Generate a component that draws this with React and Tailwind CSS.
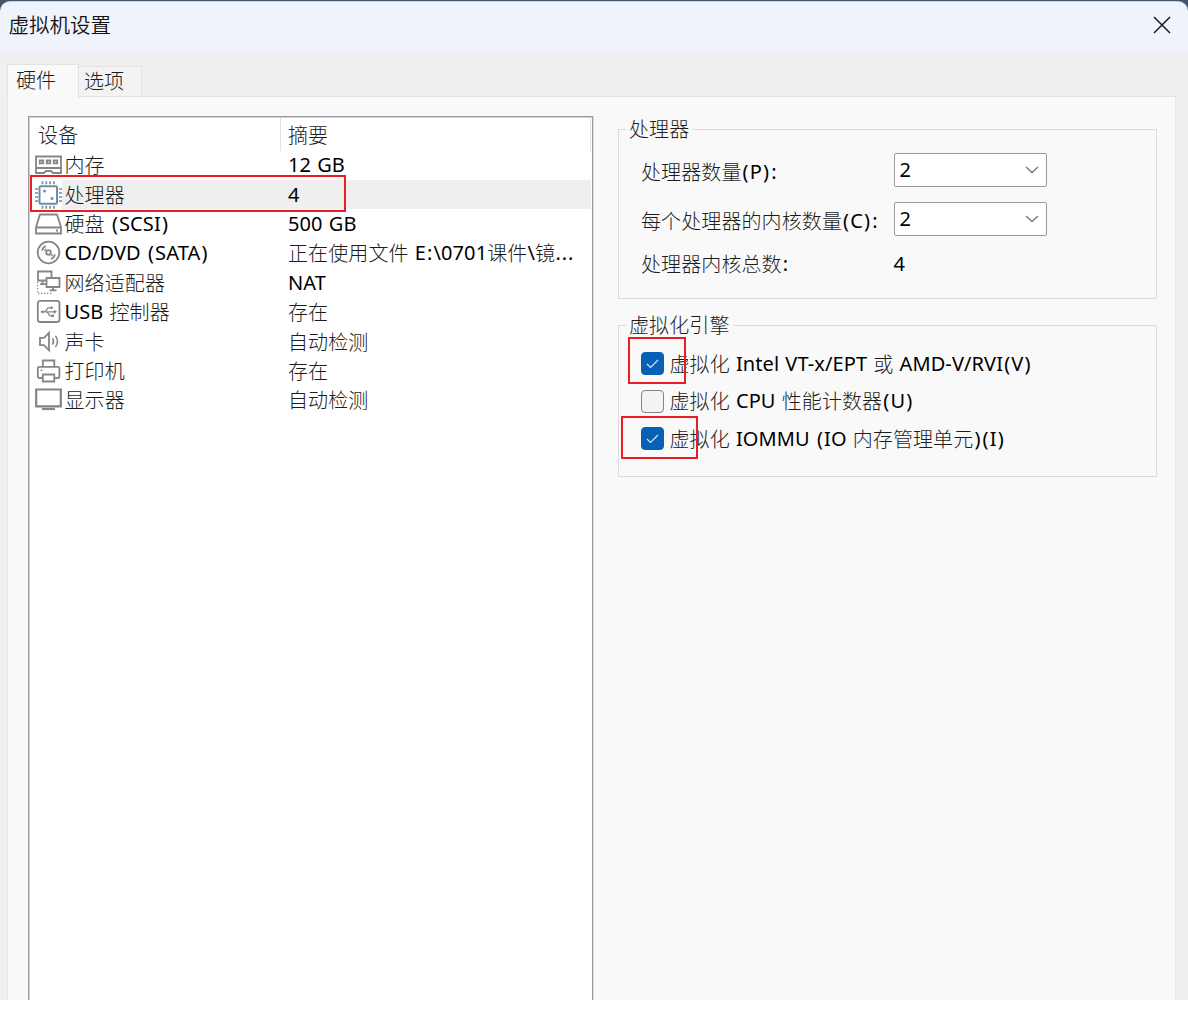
import React, { useState } from 'react';

// Latin runs are darker and heavier than the Chinese ones, brackets and colons sit wider
function Label({ children }) {
  const parts = String(children).split(/([\u4e00-\u9fff]+|[():.])/).filter(Boolean);
  return (
    <span className="whitespace-pre">
      {parts.map((part, i) => {
        if (/[\u4e00-\u9fff]/.test(part)) {
          return <span key={i} className="relative top-px font-light text-[#1c1c1c] tracking-[0.100px]">{part}</span>;
        }
        if (/^[():]$/.test(part)) {
          return <span key={i} className="px-[1.100px] text-black">{part}</span>;
        }
        if (part === '.') {
          return <span key={i} className="px-[0.450px] text-black">{part}</span>;
        }
        return <span key={i} className="text-black [word-spacing:0.800px] tracking-[0.100px]">{part}</span>;
      })}
    </span>
  );
}

function DeviceIcon({ color = '#858585', children }) {
  return (
    <svg width="28" height="28" viewBox="0 0 28 28" fill="none" stroke={color} strokeWidth="1.8" className="shrink-0">
      {children}
    </svg>
  );
}

const MemoryIcon = () => (
  <DeviceIcon>
    <path d="M2 5.500h25v11.500H2zM2 17v5h8l2-2h5l2 2h8v-5" />
    <path d="M5.800 9.500h3.400v2.900H5.800zM12.800 9.500h3.400v2.900h-3.400zM19.800 9.500h3.400v2.900h-3.400z" strokeWidth="1.900" />
  </DeviceIcon>
);

const CpuIcon = () => (
  <DeviceIcon color="#6f8ea6">
    <rect x="5.500" y="5.200" width="17.500" height="17.500" rx="1" strokeWidth="2" />
    <path d="M8.500 0.200v3M12.300 0.200v3M16.200 0.200v3M20 0.200v3M8.500 24.700v3M12.300 24.700v3M16.200 24.700v3M20 24.700v3" strokeWidth="1.700" />
    <path d="M1 8h3M1 12h3M1 16h3M1 20h3M25 8h3M25 12h3M25 16h3M25 20h3" strokeWidth="1.700" />
    <circle cx="10.500" cy="10" r="1.500" fill="#6f8ea6" stroke="none" />
    <circle cx="18" cy="17.600" r="1.500" fill="#6f8ea6" stroke="none" />
  </DeviceIcon>
);

const DiskIcon = () => (
  <DeviceIcon>
    <path d="M2 17L6 4.500h17L27 17v6.500H2zM2 17.500h25" />
    <path d="M22 20.500h2" />
  </DeviceIcon>
);

const DiscIcon = () => (
  <DeviceIcon>
    <circle cx="14.500" cy="13.500" r="10.800" />
    <circle cx="14.500" cy="13.500" r="2.300" />
    <path d="M8 11.500q1-3.500 4-4.500M17 20q3-1 4-4.500" />
    <path d="M10.500 12q.5-1.500 1.500-2.200M17 17.300q1.200-.8 1.700-2.200" strokeWidth="1.200" />
  </DeviceIcon>
);

const NetworkIcon = () => (
  <DeviceIcon>
    <path d="M12 11.500H4v-9h13.500v5.500" />
    <path d="M8.500 12v3M6 15.200h6" />
    <path d="M12.500 9h13v9h-13zM19 18v3M15.500 21.300h7" />
    <path d="M3.700 13v11M4 24.300h14" strokeDasharray="1.300 1.700" strokeWidth="1.200" />
  </DeviceIcon>
);

const UsbIcon = () => (
  <DeviceIcon>
    <rect x="3.800" y="2.800" width="21.700" height="21.200" rx="2.500" />
    <path d="M7 13.800h14M11 13.800l3-4h2.500M13 13.800l3 4h2" strokeWidth="1.300" />
    <path d="M6.500 13.800l3-2v4zM20 11.800l3 2-3 2z" fill="#858585" stroke="none" />
    <circle cx="17.500" cy="9.800" r="1.400" fill="#858585" stroke="none" />
    <path d="M17.500 16.600h2.500v2.500h-2.500z" fill="#858585" stroke="none" />
  </DeviceIcon>
);

const SoundIcon = () => (
  <DeviceIcon>
    <path d="M6 9.800h4l5-5v17.500L10 17.100H6z" />
    <path d="M18.500 10.100q2 3.300 0 6.600M21.500 7.800q4 5.600 0 11.200" strokeWidth="1.500" />
  </DeviceIcon>
);

const PrinterIcon = () => (
  <DeviceIcon>
    <path d="M8.800 9.500V3.500h11.500v6M8.500 21H5.500q-1.700 0-1.700-1.700v-7.800q0-1.700 1.700-1.700h18.200q1.700 0 1.700 1.700v7.800q0 1.700-1.700 1.700H21" />
    <path d="M8.800 17.500h11.500v7H8.800z" />
    <path d="M6.500 13.300h2" strokeWidth="1.400" />
  </DeviceIcon>
);

const DisplayIcon = () => (
  <DeviceIcon>
    <path d="M2.200 3.500h24.600v16.800H2.200z" strokeWidth="2.200" />
    <path d="M8 23h13" strokeWidth="2.200" />
  </DeviceIcon>
);

const devices = [
  { icon: MemoryIcon, name: '内存', summary: '12 GB' },
  { icon: CpuIcon, name: '处理器', summary: '4' },
  { icon: DiskIcon, name: '硬盘 (SCSI)', summary: '500 GB' },
  { icon: DiscIcon, name: 'CD/DVD (SATA)', summary: '正在使用文件 E:\\0701课件\\镜...' },
  { icon: NetworkIcon, name: '网络适配器', summary: 'NAT' },
  { icon: UsbIcon, name: 'USB 控制器', summary: '存在' },
  { icon: SoundIcon, name: '声卡', summary: '自动检测' },
  { icon: PrinterIcon, name: '打印机', summary: '存在' },
  { icon: DisplayIcon, name: '显示器', summary: '自动检测' },
];

function DeviceList() {
  const [selected, setSelected] = useState(1);

  return (
    <div className="w-[565px] shrink-0 pt-px pl-px bg-white border border-b-0 border-[#999ca4] shadow-[inset_1px_1px_0_#cfd1d8,1px_0_0_#dcdde0]">
      <div className="flex h-[32.600px]">
        <div className="w-[251px] pl-[8px] pt-px border-r border-[#e2e2e2] leading-8"><Label>设备</Label></div>
        <div className="flex-1 pl-[7px] pt-px mr-px border-r border-[#e2e2e2] leading-8"><Label>摘要</Label></div>
      </div>
      {devices.map(({ icon: Icon, name, summary }, i) => (
        <div key={name} onClick={() => setSelected(i)} className="relative flex items-center h-[29.400px] pl-1">
          <Icon />
          <div className={`flex flex-1 items-center h-full mr-px pl-[2.500px] ${i === selected ? 'bg-[#efefef]' : ''}`}>
            <div className="w-[223.500px]"><Label>{name}</Label></div>
            <Label>{summary}</Label>
          </div>
          {i === selected && (
            <div className="absolute left-0 -top-[4.500px] w-[316px] h-[37px] border-2 border-[#ec1c24]" />
          )}
        </div>
      ))}
    </div>
  );
}

function Group({ title, className, children }) {
  return (
    <fieldset className={`border border-[#dcdcdc] ${className}`}>
      <legend className="ml-[7px] px-[3px] h-6 leading-6"><Label>{title}</Label></legend>
      {children}
    </fieldset>
  );
}

function Combo({ value }) {
  return (
    <div className="flex items-center justify-between w-[153px] h-[34px] pl-[5px] pr-[7px] bg-white border border-[#9a9a9a] rounded-[2px]">
      <Label>{value}</Label>
      <svg width="14" height="8" viewBox="0 0 14 8" fill="none" stroke="#777" strokeWidth="1.300">
        <path d="M1 1l6 5.500L13 1" />
      </svg>
    </div>
  );
}

function Option({ checked, label, mark }) {
  return (
    <div className="relative flex items-center h-[37.500px] pl-[22px]">
      <span className={`flex items-center justify-center w-[23px] h-[23px] mr-[5.500px] rounded-[4px] border ${checked ? 'bg-[#0560b6] border-[#0560b6]' : 'bg-[#f3f3f3] border-[#858585]'}`}>
        {checked && (
          <svg width="13" height="10" viewBox="0 0 13 10" fill="none" stroke="#d5e5f4" strokeWidth="1.200">
            <path d="M1 5l3.500 3.500L12 1" />
          </svg>
        )}
      </span>
      <Label>{label}</Label>
      {mark && <div className={`absolute border-2 border-[#ec1c24] ${mark}`} />}
    </div>
  );
}

export default function App() {
  return (
    <div
      className="flex flex-col w-[1188px] h-[1013px] pb-[13px] bg-white overflow-hidden text-[20px] leading-6 text-black"
      style={{ fontFamily: '"Noto Sans", "Noto Sans CJK SC", sans-serif' }}
    >
      <div className="flex flex-col flex-1 min-h-0 bg-[#efefef]">
        {/* Title bar */}
        <div className="h-[51px] pt-px bg-[#44546b]">
          <div className="flex items-center justify-between h-[50px] pb-[3px] pl-[8.500px] pr-[17px] bg-[#eff3fb] border-t border-[#c9d0dc] rounded-t-[10px]">
            <span className="text-[20.500px] font-[350] text-[#111]">虚拟机设置</span>
            <svg width="18" height="18" viewBox="0 0 18 18" fill="none" stroke="#1a1a1a" strokeWidth="1.500">
              <path d="M1 1l16 16M17 1L1 17" />
            </svg>
          </div>
        </div>

        {/* Tabs */}
        <div className="flex items-end h-[46px] pl-[7px]">
          <div className="relative w-[72px] h-[34px] -mb-px pl-[8px] bg-[#f9f9f9] border border-b-0 border-[#e3e3e3] leading-[30px]"><Label>硬件</Label></div>
          <div className="w-[63px] h-[31px] pl-[5px] bg-[#f3f3f3] border border-l-0 border-b-0 border-[#e3e3e3] leading-[28px]"><Label>选项</Label></div>
        </div>

        <div className="flex flex-1 ml-[7px] mr-[12px] pl-5 pt-[19px] bg-[#f9f9f9] border border-t-[#e3e3e3] border-[#e6e6e6] border-b-0 -mt-px">
          <DeviceList />
          <div className="flex flex-col w-[539px] ml-[25px] pt-[1px] gap-[14px]">
            <Group title="处理器" className="h-[182px]">
              <div className="grid grid-cols-[252.500px_153px] items-center gap-y-[15px] pl-[22px] pt-3">
                <div className="pt-[3px]"><Label>处理器数量(P):</Label></div>
                <Combo value="2" />
                <div className="pt-[3px]"><Label>每个处理器的内核数量(C):</Label></div>
                <Combo value="2" />
                <div className="pt-px"><Label>处理器内核总数:</Label></div>
                <div className="pt-px"><Label>4</Label></div>
              </div>
            </Group>
            <Group title="虚拟化引擎" className="h-[164px]">
              <div className="pt-2">
                <Option checked label="虚拟化 Intel VT-x/EPT 或 AMD-V/RVI(V)" mark="left-[9px] -top-[8px] w-[58px] h-[47px]" />
                <Option label="虚拟化 CPU 性能计数器(U)" />
                <Option checked label="虚拟化 IOMMU (IO 内存管理单元)(I)" mark="left-[2px] -top-[4px] w-[77px] h-[43px]" />
              </div>
            </Group>
          </div>
        </div>
      </div>
    </div>
  );
}
